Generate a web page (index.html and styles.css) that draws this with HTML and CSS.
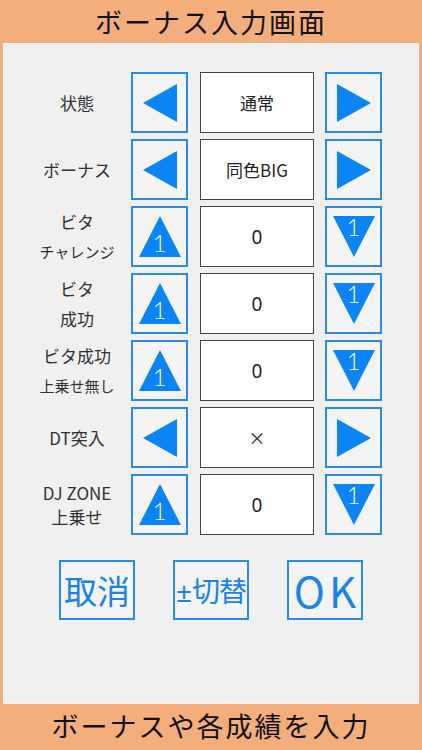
FILE: index.html
```html
<!DOCTYPE html>
<html lang="ja">
<head>
  <meta charset="UTF-8" />
  <title>ボーナス入力画面</title>
  <link rel="stylesheet" href="styles.css">
</head>
<body>
  <div class="bar top">ボーナス入力画面</div>

  <div class="panel">
    <div class="grid">
      <!-- 状態 -->
      <div class="label">状態</div>
      <button class="btn"><svg width="34" height="38" viewBox="0 0 34 38"><polygon points="34,0 34,38 0,19"/></svg></button>
      <div class="value">通常</div>
      <button class="btn"><svg width="34" height="38" viewBox="0 0 34 38"><polygon points="0,0 0,38 34,19"/></svg></button>

      <!-- ボーナス -->
      <div class="label">ボーナス</div>
      <button class="btn"><svg width="34" height="38" viewBox="0 0 34 38"><polygon points="34,0 34,38 0,19"/></svg></button>
      <div class="value">同色BIG</div>
      <button class="btn"><svg width="34" height="38" viewBox="0 0 34 38"><polygon points="0,0 0,38 34,19"/></svg></button>

      <!-- ビタチャレンジ -->
      <div class="label two"><span>ビタ</span><span class="sm">チャレンジ</span></div>
      <button class="btn up"><svg width="42" height="41" viewBox="0 0 42 41"><polygon points="21,0 42,41 0,41"/></svg><span class="n">1</span></button>
      <div class="value num">0</div>
      <button class="btn down"><svg width="42" height="41" viewBox="0 0 42 41"><polygon points="0,0 42,0 21,41"/></svg><span class="n">1</span></button>

      <!-- ビタ成功 -->
      <div class="label two"><span>ビタ</span><span>成功</span></div>
      <button class="btn up"><svg width="42" height="41" viewBox="0 0 42 41"><polygon points="21,0 42,41 0,41"/></svg><span class="n">1</span></button>
      <div class="value num">0</div>
      <button class="btn down"><svg width="42" height="41" viewBox="0 0 42 41"><polygon points="0,0 42,0 21,41"/></svg><span class="n">1</span></button>

      <!-- ビタ成功上乗せ無し -->
      <div class="label two"><span>ビタ成功</span><span class="sm">上乗せ無し</span></div>
      <button class="btn up"><svg width="42" height="41" viewBox="0 0 42 41"><polygon points="21,0 42,41 0,41"/></svg><span class="n">1</span></button>
      <div class="value num">0</div>
      <button class="btn down"><svg width="42" height="41" viewBox="0 0 42 41"><polygon points="0,0 42,0 21,41"/></svg><span class="n">1</span></button>

      <!-- DT突入 -->
      <div class="label">DT突入</div>
      <button class="btn"><svg width="34" height="38" viewBox="0 0 34 38"><polygon points="34,0 34,38 0,19"/></svg></button>
      <div class="value">×</div>
      <button class="btn"><svg width="34" height="38" viewBox="0 0 34 38"><polygon points="0,0 0,38 34,19"/></svg></button>

      <!-- DJ ZONE -->
      <div class="label tight"><span>DJ ZONE</span><span>上乗せ</span></div>
      <button class="btn up"><svg width="42" height="41" viewBox="0 0 42 41"><polygon points="21,0 42,41 0,41"/></svg><span class="n">1</span></button>
      <div class="value num">0</div>
      <button class="btn down"><svg width="42" height="41" viewBox="0 0 42 41"><polygon points="0,0 42,0 21,41"/></svg><span class="n">1</span></button>
    </div>

    <div class="actions">
      <button class="act">取消</button>
      <button class="act swap"><span class="pm">±</span>切替</button>
      <button class="act ok">OK</button>
    </div>
  </div>

  <div class="bar bottom">ボーナスや各成績を入力</div>
</body>
</html>
```

FILE: styles.css
```css
body {
  margin: 0;
  width: 422px;
  height: 750px;
  background: #f3ae7c;
  font-family: "Noto Sans CJK JP", "Noto Sans", sans-serif;
  display: flex;
  flex-direction: column;
}
.bar {
  text-align: center;
  color: #111;
  font-size: 27px;
  letter-spacing: 2px;
}
.top {
  height: 43px;
  line-height: 43px;
}
.bottom {
  height: 44px;
  line-height: 44px;
}
.panel {
  height: 661px;
  margin: 0 3px;
  background: #f0f0f0;
  border: 1px solid #fbf3ee;
  box-sizing: border-box;
  padding-top: 28px;
}
.grid {
  display: grid;
  grid-template-columns: 108px 57px 137px 57px;
  grid-auto-rows: 61px;
  row-gap: 6px;
  padding-left: 19px;
}
.label {
  display: flex;
  flex-direction: column;
  justify-content: center;
  align-items: center;
  color: #333;
  font-size: 17px;
}
.label.two {
  gap: 10px;
  line-height: 20px;
}
.label.tight {
  line-height: 24px;
}
.label .sm {
  font-size: 15px;
}
.btn {
  position: relative;
  margin: 0;
  padding: 0;
  background: #f4f4f4;
  border: 2px solid #2a8ae8;
  display: flex;
  align-items: center;
  justify-content: center;
}
.btn svg polygon {
  fill: #0b84f5;
}
/* the small "1" sits on top of the triangle */
.btn .n {
  position: absolute;
  left: 0;
  right: 0;
  text-align: center;
  color: #fff;
  font-family: "Lato", "Liberation Sans", sans-serif;
  font-weight: 300;
  font-size: 24px;
  line-height: 24px;
}
.up .n {
  top: 23px;
}
.down .n {
  top: 7px;
}
.value {
  margin: 0 11px 0 12px;
  background: #fff;
  border: 1.5px solid #444;
  display: flex;
  align-items: center;
  justify-content: center;
  color: #222;
  font-size: 17px;
}
.value.num {
  font-size: 19px;
  font-family: "Noto Sans", sans-serif;
}
.actions {
  display: flex;
  justify-content: center;
  gap: 38px;
  margin-top: 25px;
}
.act {
  width: 76px;
  height: 60px;
  margin: 0;
  padding: 0;
  background: #f4f4f4;
  border: 2px solid #2a8ae8;
  color: #1a82ea;
  font-family: "Noto Sans CJK JP", sans-serif;
  font-size: 33px;
  line-height: 1;
  white-space: nowrap;
}
.act.swap {
  font-size: 28px;
  letter-spacing: -1px;
}
.act .pm {
  font-family: "Noto Sans", sans-serif;
  letter-spacing: 0;
}
.act.ok {
  font-size: 42px;
  letter-spacing: 4px;
  padding-left: 4px;
}
```
